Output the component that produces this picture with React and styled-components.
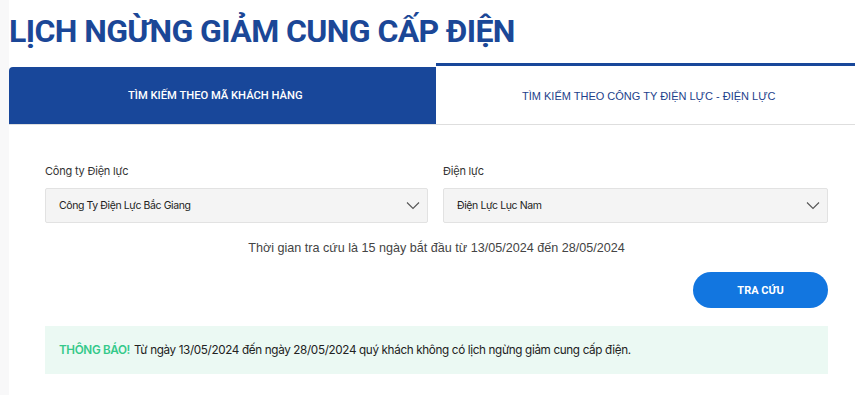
import React from "react";
import styled, { createGlobalStyle } from "styled-components";

const GlobalStyle = createGlobalStyle`
  html, body {
    margin: 0;
    padding: 0;
    background: #ffffff;
    overflow: hidden;
    font-family: Roboto, "Liberation Sans", sans-serif;
  }
`;

const Page = styled.div`
  width: 862px;
  min-height: 395px;
  box-sizing: border-box;
  border-left: 9px solid #f8f8f9;
`;

const Title = styled.h1`
  margin: 0;
  padding: 11px 0 0 0;
  height: 52px;
  box-sizing: border-box;
  font-family: Roboto, sans-serif;
  font-size: 32px;
  font-weight: 700;
  letter-spacing: -0.6px;
  color: #1b4797;
  line-height: 40px;
`;

const Card = styled.div`
  margin-top: 11px;
  background: #fff;
`;

const Tabs = styled.div`
  display: flex;
  align-items: flex-end;
  border-bottom: 1px solid #dedede;
`;

const Tab = styled.div`
  flex: 0 0 50%;
  display: flex;
  align-items: center;
  justify-content: center;
  box-sizing: border-box;
  height: ${(p) => (p.$active ? "57px" : "61px")};
  background: ${(p) => (p.$active ? "#18479a" : "#fff")};
  border-top: ${(p) => (p.$active ? "none" : "3px solid #18479a")};
  border-top-left-radius: ${(p) => (p.$active ? "4px" : "0")};
  color: ${(p) => (p.$active ? "#fff" : "#1d3f8c")};
  font-family: ${(p) =>
    p.$active ? "Roboto, sans-serif" : '"Liberation Sans", Arial, sans-serif'};
  font-size: ${(p) => (p.$active ? "11.2px" : "11px")};
  font-weight: ${(p) => (p.$active ? 500 : 400)};
  padding-top: ${(p) => (p.$active ? "0" : "2px")};
  padding-right: ${(p) => (p.$active ? "14px" : "0")};
`;

const Body = styled.div`
  padding: 38px 34px 20px 36px;
`;

const Fields = styled.div`
  display: grid;
  grid-template-columns: 383px 385px;
  column-gap: 15px;
`;

const Field = styled.div`
  display: flex;
  flex-direction: column;
`;

const Label = styled.label`
  font-family: Inter, Roboto, sans-serif;
  font-size: 11px;
  letter-spacing: -0.2px;
  color: #333;
  line-height: 14px;
  margin-bottom: 10px;
  padding-top: 1px;
`;

const Select = styled.div`
  height: 35px;
  box-sizing: border-box;
  background: #f4f4f4;
  border: 1px solid #e2e2e2;
  border-radius: 2px;
  display: flex;
  align-items: center;
  justify-content: space-between;
  padding: 0 7px 0 13px;
  font-family: Inter, Roboto, sans-serif;
  font-size: 10.5px;
  letter-spacing: -0.4px;
  color: #222;
`;

const Hint = styled.p`
  margin: 16px 0 0;
  text-align: center;
  font-family: "Liberation Sans", Arial, sans-serif;
  font-size: 12.6px;
  color: #444;
  line-height: 18px;
`;

const Actions = styled.div`
  display: flex;
  justify-content: flex-end;
  margin-top: 15px;
`;

const Button = styled.button`
  width: 135px;
  height: 36px;
  border: none;
  border-radius: 18px;
  background: #1276e0;
  color: #fff;
  font-family: Roboto, sans-serif;
  font-size: 11px;
  font-weight: 700;
  cursor: pointer;
`;

const Notice = styled.div`
  margin-top: 18px;
  height: 48px;
  display: flex;
  align-items: center;
  padding-left: 14px;
  background: #ebf9f3;
  font-family: Inter, Roboto, sans-serif;
  font-size: 11.7px;
  letter-spacing: -0.35px;
  color: #222;
`;

const NoticeTag = styled.span`
  color: #34c98a;
  font-weight: 600;
  margin-right: 4px;
`;

const Chevron = () => (
  <svg width="14" height="9" viewBox="0 0 14 9" fill="none">
    <polyline points="1,1.5 7,7.5 13,1.5" stroke="#555" strokeWidth="1.1" />
  </svg>
);

export default function App() {
  return (
    <Page>
      <GlobalStyle />
      <Title>LỊCH NGỪNG GIẢM CUNG CẤP ĐIỆN</Title>
      <Card>
        <Tabs>
          <Tab $active>TÌM KIẾM THEO MÃ KHÁCH HÀNG</Tab>
          <Tab>TÌM KIẾM THEO CÔNG TY ĐIỆN LỰC - ĐIỆN LỰC</Tab>
        </Tabs>
        <Body>
          <Fields>
            <Field>
              <Label>Công ty Điện lực</Label>
              <Select>
                Công Ty Điện Lực Bắc Giang
                <Chevron />
              </Select>
            </Field>
            <Field>
              <Label>Điện lực</Label>
              <Select>
                Điện Lực Lục Nam
                <Chevron />
              </Select>
            </Field>
          </Fields>
          <Hint>
            Thời gian tra cứu là 15 ngày bắt đầu từ 13/05/2024 đến 28/05/2024
          </Hint>
          <Actions>
            <Button>TRA CỨU</Button>
          </Actions>
          <Notice>
            <NoticeTag>THÔNG BÁO!</NoticeTag>
            Từ ngày 13/05/2024 đến ngày 28/05/2024 quý khách không có lịch
            ngừng giảm cung cấp điện.
          </Notice>
        </Body>
      </Card>
    </Page>
  );
}
